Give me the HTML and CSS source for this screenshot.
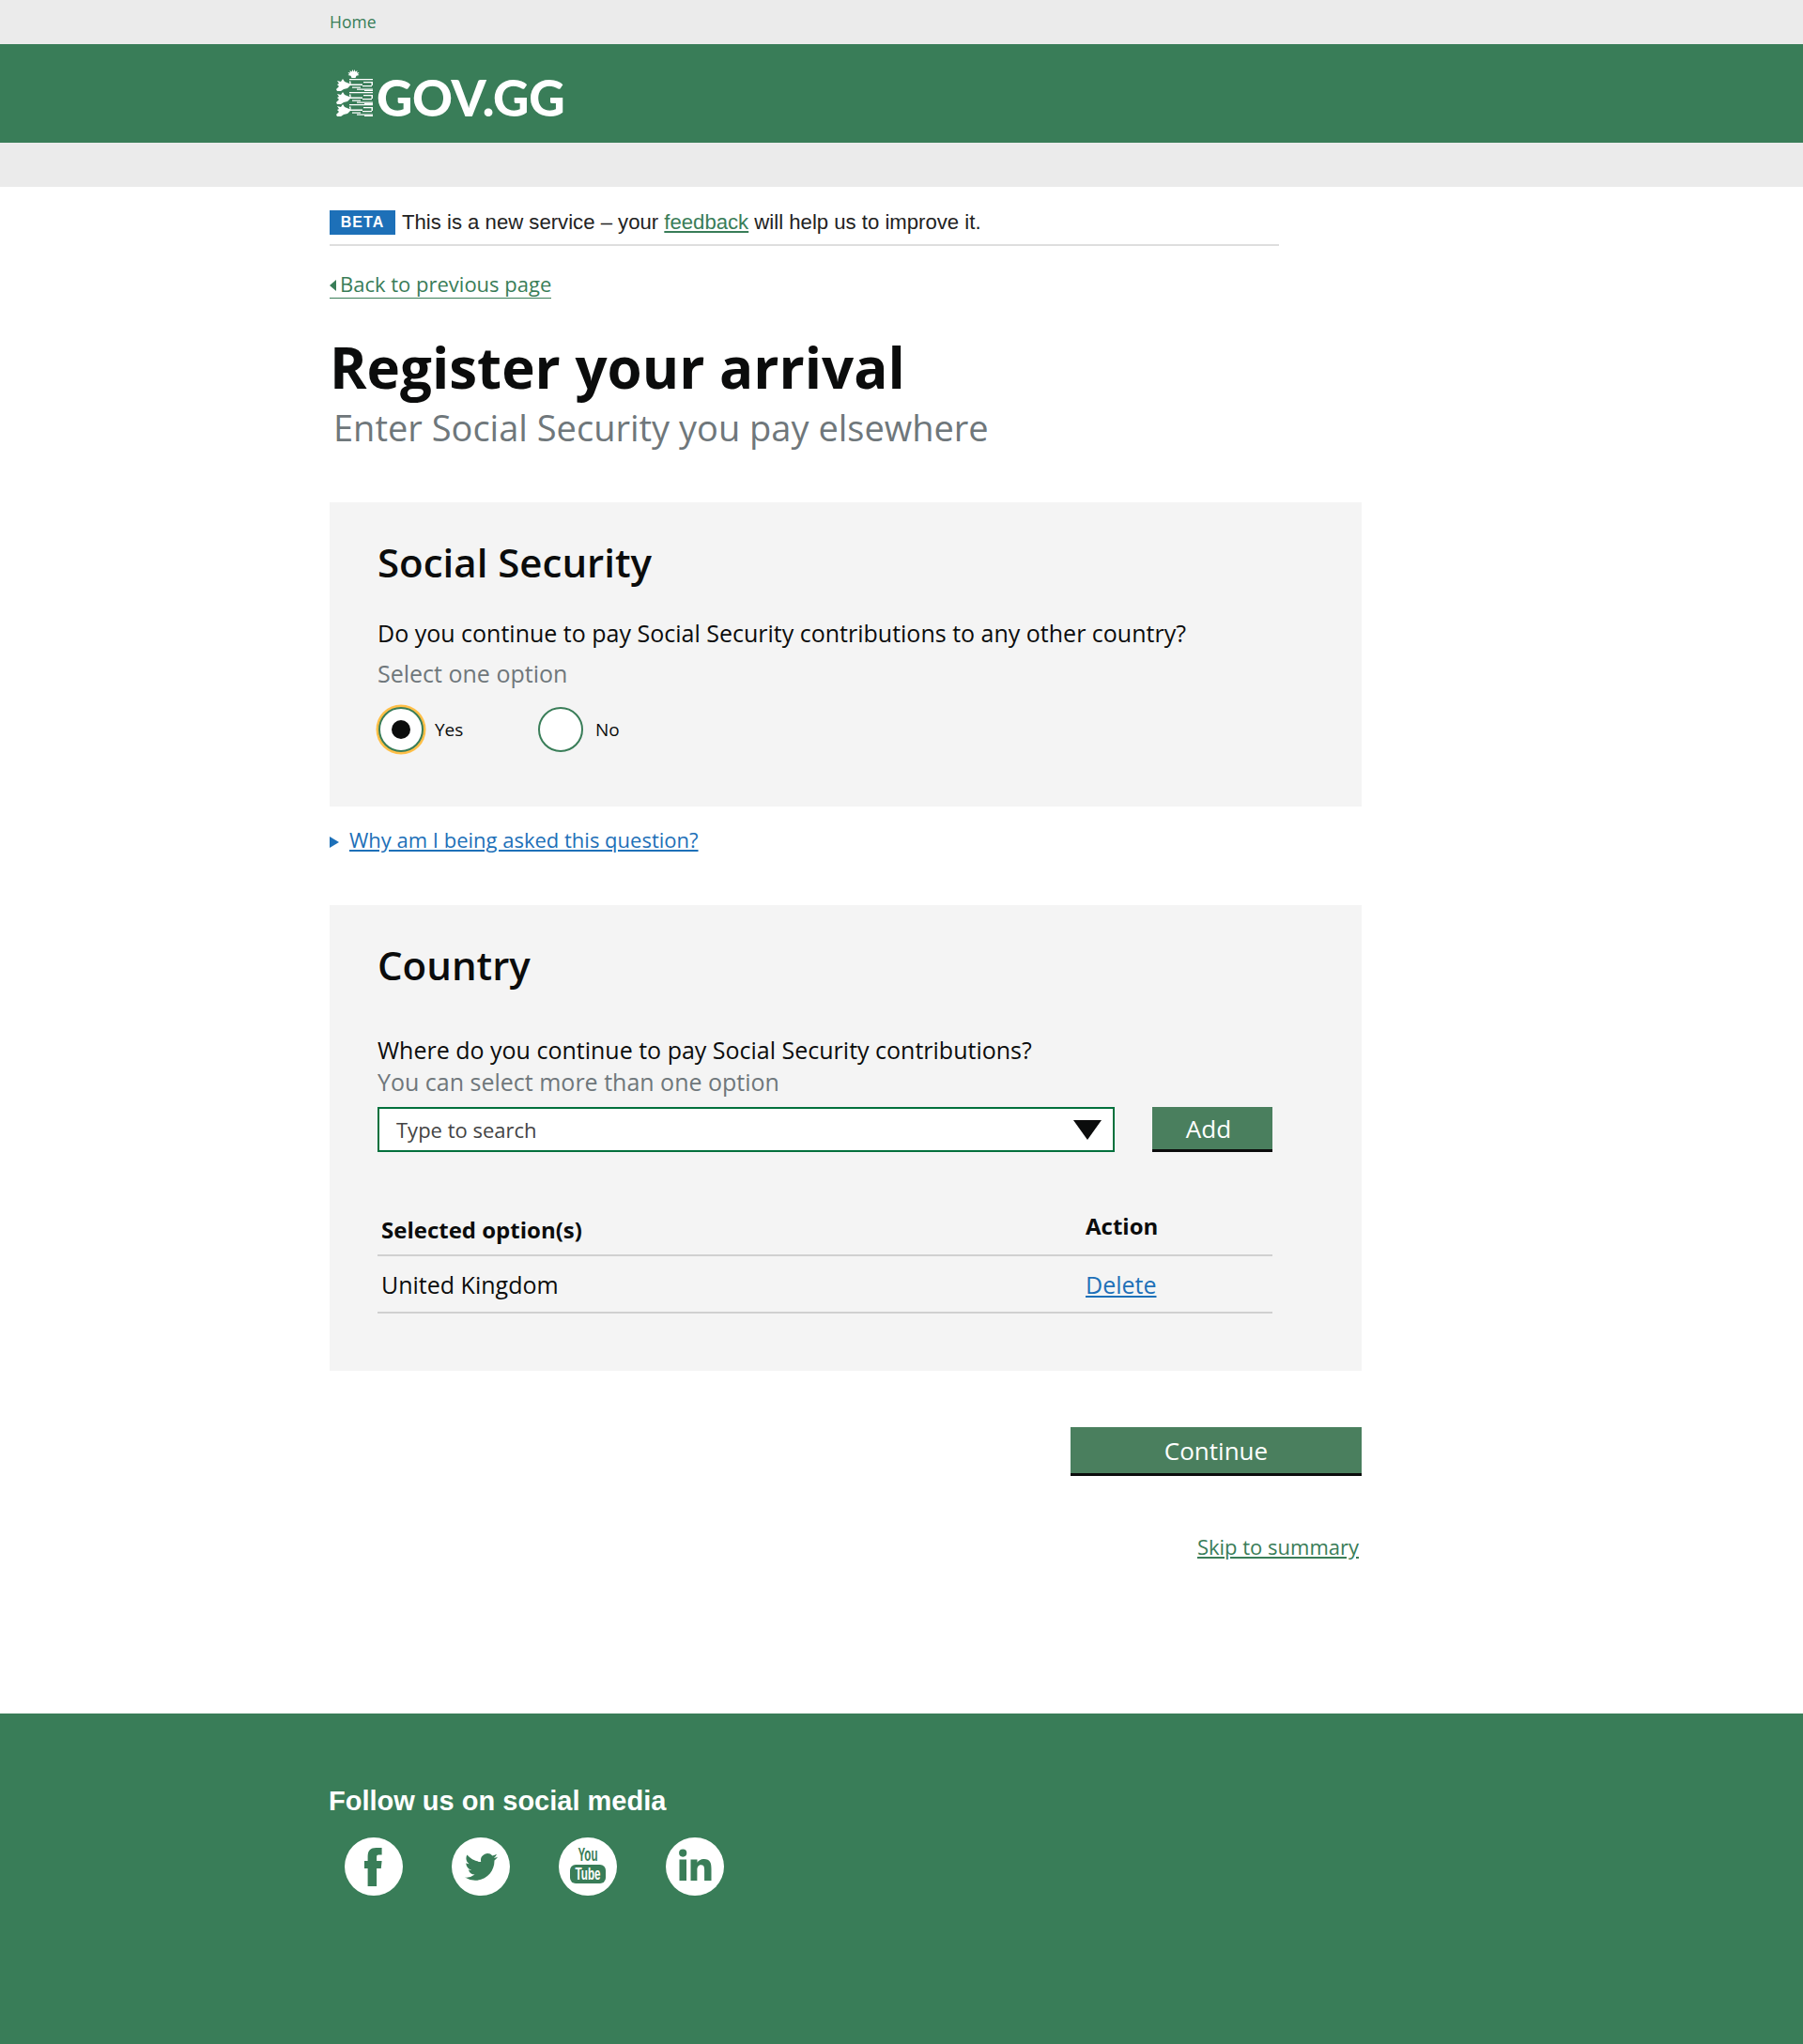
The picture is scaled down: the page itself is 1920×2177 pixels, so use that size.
FILE: index.html
```html
<!DOCTYPE html>
<html lang="en">
<head>
<meta charset="utf-8">
<title>Register your arrival - GOV.GG</title>
<link rel="stylesheet" href="styles.css">
</head>
<body>
<div class="topbar"><div class="wrap"><a class="home" href="#">Home</a></div></div>
<header class="brand"><div class="wrap brand-inner">
  <svg class="crest" viewBox="0 0 39 51" aria-hidden="true">
    <defs>
      <g id="lion">
        <path d="M0 11l3-3-2-2 2-1-2-3 4 1 2-3 2 3 5 2 2-1-1 3-3 3-4 1-3 2-4 0z"/>
        <path d="M14 0h25v1.300H14zM14 2.500h1.500v2H14zM29 3h10v1.200H29zM37.500 4h1.500v3h-1.500zM13 5.500h15v1.600H13zM17 8.500h9v1.300h-9zM28 7h10v1.300H28zM22 10.500h17v1.200H22zM30 12h9v1h-9z"/>
      </g>
    </defs>
    <g fill="#fff">
      <path d="M17.500 0l1 2.500 1-2.500 1 2.500 2-1.500-.5 2.500 2.500-.5-1.500 2 1.500 1-3 .7-1 2.300h-4l-1-2.300-3-.7 1.500-1-1.500-2 2.500.5-.5-2.500 2 1.500z"/>
      <use href="#lion" y="10"/>
      <use href="#lion" y="24"/>
      <use href="#lion" y="37"/>
    </g>
  </svg>
  <span class="wordmark">GOV.GG</span>
</div></header>
<div class="subbar"></div>
<main class="wrap">
  <div class="beta">
    <strong class="tag">BETA</strong>
    <span>This is a new service – your <a href="#">feedback</a> will help us to improve it.</span>
  </div>
  <a class="back" href="#"><i class="back-arrow"></i>Back to previous page</a>
  <h1>Register your arrival</h1>
  <p class="subtitle">Enter Social Security you pay elsewhere</p>
  <div class="column">
    <section class="panel panel-one">
      <h2>Social Security</h2>
      <p class="question">Do you continue to pay Social Security contributions to any other country?</p>
      <p class="hint">Select one option</p>
      <div class="radios">
        <label class="radio radio-on"><i class="dot"></i>Yes</label>
        <label class="radio"><i class="dot"></i>No</label>
      </div>
    </section>
    <div class="why"><i class="why-arrow"></i><a href="#">Why am I being asked this question?</a></div>
    <section class="panel panel-two">
      <h2>Country</h2>
      <p class="question q-tight">Where do you continue to pay Social Security contributions?</p>
      <p class="hint hint-tight">You can select more than one option</p>
      <div class="picker">
        <div class="select">Type to search<i class="caret"></i></div>
        <button class="btn btn-add" type="button">Add</button>
      </div>
      <table>
        <thead><tr><th class="col-a">Selected option(s)</th><th class="col-b">Action</th></tr></thead>
        <tbody><tr><td>United Kingdom</td><td><a href="#">Delete</a></td></tr></tbody>
      </table>
    </section>
    <div class="actions">
      <button class="btn btn-continue" type="button">Continue</button>
      <a class="skip" href="#">Skip to summary</a>
    </div>
  </div>
</main>
<footer class="foot"><div class="wrap">
  <h3>Follow us on social media</h3>
  <div class="social">
    <svg viewBox="0 0 62 62" aria-label="Facebook"><circle cx="31" cy="31" r="31" fill="#fff"/><path fill="#397d58" d="M24.600 52V33H21v-8h3.600v-5c0-6 3-9 9-9h6v7.500h-3.500c-1.500 0-2 .8-2 2.500v4h5.500l-.8 8h-4.700v19z"/></svg>
    <svg viewBox="0 0 62 62" aria-label="Twitter"><circle cx="31" cy="31" r="31" fill="#fff"/><path fill="#397d58" transform="translate(14 14) scale(1.46)" d="M23.950 4.570a10 10 0 0 1-2.820.77 4.960 4.960 0 0 0 2.160-2.720c-.95.55-2 .95-3.120 1.170a4.920 4.920 0 0 0-8.380 4.480C7.690 8.090 4.070 6.130 1.640 3.160a4.820 4.820 0 0 0-.67 2.480c0 1.710.87 3.210 2.190 4.100a4.900 4.900 0 0 1-2.230-.61v.06c0 2.380 1.700 4.370 3.950 4.820-.72.2-1.490.23-2.230.08a4.930 4.930 0 0 0 4.600 3.420A9.870 9.870 0 0 1 0 19.540a13.900 13.900 0 0 0 7.550 2.210c9.060 0 14-7.500 14-14v-.64c.96-.69 1.800-1.560 2.460-2.540z"/></svg>
    <svg viewBox="0 0 62 62" aria-label="YouTube"><circle cx="31" cy="31" r="31" fill="#fff"/><text class="yt-you" x="31" y="25" text-anchor="middle" textLength="21" lengthAdjust="spacingAndGlyphs">You</text><rect x="12" y="29" width="38" height="20" rx="6" fill="#397d58"/><text class="yt-tube" x="31" y="45" text-anchor="middle" textLength="27" lengthAdjust="spacingAndGlyphs">Tube</text></svg>
    <svg viewBox="0 0 62 62" aria-label="LinkedIn"><circle cx="31" cy="31" r="31" fill="#fff"/><path fill="#397d58" transform="translate(-.5 -.5)" d="M15 24h7.500v22.500H15zM18.700 13a4 4 0 1 1 0 8.200 4 4 0 0 1 0-8.200zM27 24h7v3.200c1.200-2 3.600-3.800 7-3.800 7 0 8 4.500 8 10.500v12.600h-7.400V35.500c0-2.700-.2-5.700-3.500-5.700-3.200 0-4.200 2.500-4.200 5.500v11.200H27z"/></svg>
  </div>
</div></footer>
</body>
</html>
```
FILE: styles.css
```css
* { box-sizing: border-box; }
body { margin: 0; background: #fff; color: #0b0c0c; font-family: "Open Sans", sans-serif; }
a { color: inherit; }
.wrap { width: 1218px; margin: 0 auto; }

.topbar { height: 47px; background: #ebebeb; }
.home { display: block; padding-top: 12px; font-size: 17.500px; line-height: 22px; color: #397d58; text-decoration: none; }
.brand { height: 105px; background: #397d58; }
.brand-inner { display: flex; align-items: flex-start; padding: 27px 0 0 7px; }
.crest { width: 39px; height: 51px; margin-right: 4px; }
.wordmark { margin-top: -2px; font-family: Lato, sans-serif; font-weight: 900; font-size: 53px; line-height: 63px; letter-spacing: -.3px; color: #fff; }
.subbar { height: 47px; background: #ebebeb; }

.beta { display: flex; align-items: center; width: 1011px; height: 63px; padding: 25px 0 11px; border-bottom: 2px solid #dedede; color: #222; font-family: "Liberation Sans", Arial, sans-serif; font-size: 22.150px; }
.tag { width: 70px; height: 26px; margin-right: 7px; background: #1d70b8; color: #fff; font-size: 16px; line-height: 26px; text-align: center; letter-spacing: 1px; }
.beta a { color: #397d58; }
.back { display: inline-flex; align-items: center; height: 31px; margin-top: 25px; border-bottom: 1px solid #397d58; color: #397d58; font-size: 22px; line-height: 30px; text-decoration: none; }
.back-arrow { width: 0; height: 0; margin: 3px 4px 0 0; border: 6.500px solid transparent; border-left: 0; border-right: 7px solid #397d58; }
h1 { margin: 33px 0 0; font-size: 60px; line-height: 80px; font-weight: 700; }
.subtitle { margin: -3px 0 0 4px; color: #6f777b; font-size: 38px; line-height: 55px; }

.column { width: 1099px; margin-top: 52px; }
.panel { background: #f4f4f4; padding: 0 51px; }
.panel-one { height: 324px; padding-top: 35px; }
.panel-two { height: 496px; padding-top: 35px; }
h2 { margin: 0; font-size: 42px; line-height: 58px; font-weight: 600; }
.question { margin: 29px 0 0; font-size: 25px; line-height: 34px; }
.hint { margin: 9px 0 0; color: #6f777b; font-size: 25px; line-height: 34px; }
.q-tight { margin-top: 44px; }
.hint-tight { margin-top: 0; }
.radios { display: flex; margin: 19px 0 0 1px; }
.radio { display: flex; align-items: center; width: 170px; font-size: 19px; line-height: 48px; }
.dot { position: relative; flex: none; width: 48px; height: 48px; margin-right: 13px; border: 2px solid #397d58; border-radius: 50%; background: #fff; }
.radio-on .dot { margin-right: 12px; box-shadow: 0 0 0 2.500px #ffbf47; }
.radio-on .dot::after { content: ""; position: absolute; top: 12px; left: 12px; width: 20px; height: 20px; border-radius: 50%; background: #0b0c0c; }

.why { display: flex; align-items: center; height: 105px; padding-bottom: 35px; color: #1d70b8; font-size: 22px; }
.why-arrow { width: 0; height: 0; margin: 6px 11px 0 0; border: 6px solid transparent; border-right: 0; border-left: 10px solid #1d70b8; }

.picker { display: flex; margin-top: 10px; }
.select { display: flex; align-items: center; justify-content: space-between; width: 785px; height: 48px; padding: 0 12px 0 18px; border: 2px solid #00703c; background: #fff; color: #444; font-size: 22px; }
.caret { width: 0; height: 0; border-left: 15px solid transparent; border-right: 15px solid transparent; border-top: 21px solid #0b0c0c; }
.btn { border: 0; border-bottom: 3px solid #0b0c0c; background: #4a7f5e; color: #fff; font-family: inherit; }
.btn-add { width: 128px; height: 48px; margin-left: 40px; padding: 0 8px 0 0; font-size: 26px; }

table { width: 953px; margin-top: 46px; border-collapse: collapse; font-size: 25px; }
th { height: 64px; padding: 0 4px; border-bottom: 2px solid #d0d0d0; text-align: left; font-size: 24px; font-weight: 700; }
.col-a { width: 750px; padding-top: 10px; }
.col-b { padding-top: 2px; }
td { height: 61px; padding: 0 4px; border-bottom: 2px solid #d0d0d0; }
td a { color: #1d70b8; }

.actions { display: flex; flex-direction: column; align-items: flex-end; margin-top: 60px; }
.btn-continue { width: 310px; height: 52px; font-size: 26px; }
.skip { margin: 60px 3px 0 0; color: #397d58; font-size: 22px; line-height: 30px; }

.foot { height: 352px; margin-top: 163px; background: #397d58; color: #fff; }
.foot h3 { margin: 0 0 0 -1px; padding-top: 73px; font-family: "Liberation Sans", Arial, sans-serif; font-size: 29px; line-height: 40px; font-weight: 700; }
.social { display: flex; gap: 52px; margin: 19px 0 0 16px; }
.social svg { width: 62px; height: 62px; }
.yt-you { font-family: "Liberation Sans Narrow", "Liberation Sans", sans-serif; font-weight: 700; font-size: 20px; fill: #397d58; }
.yt-tube { font-family: "Liberation Sans Narrow", "Liberation Sans", sans-serif; font-weight: 700; font-size: 18px; fill: #fff; }
```
